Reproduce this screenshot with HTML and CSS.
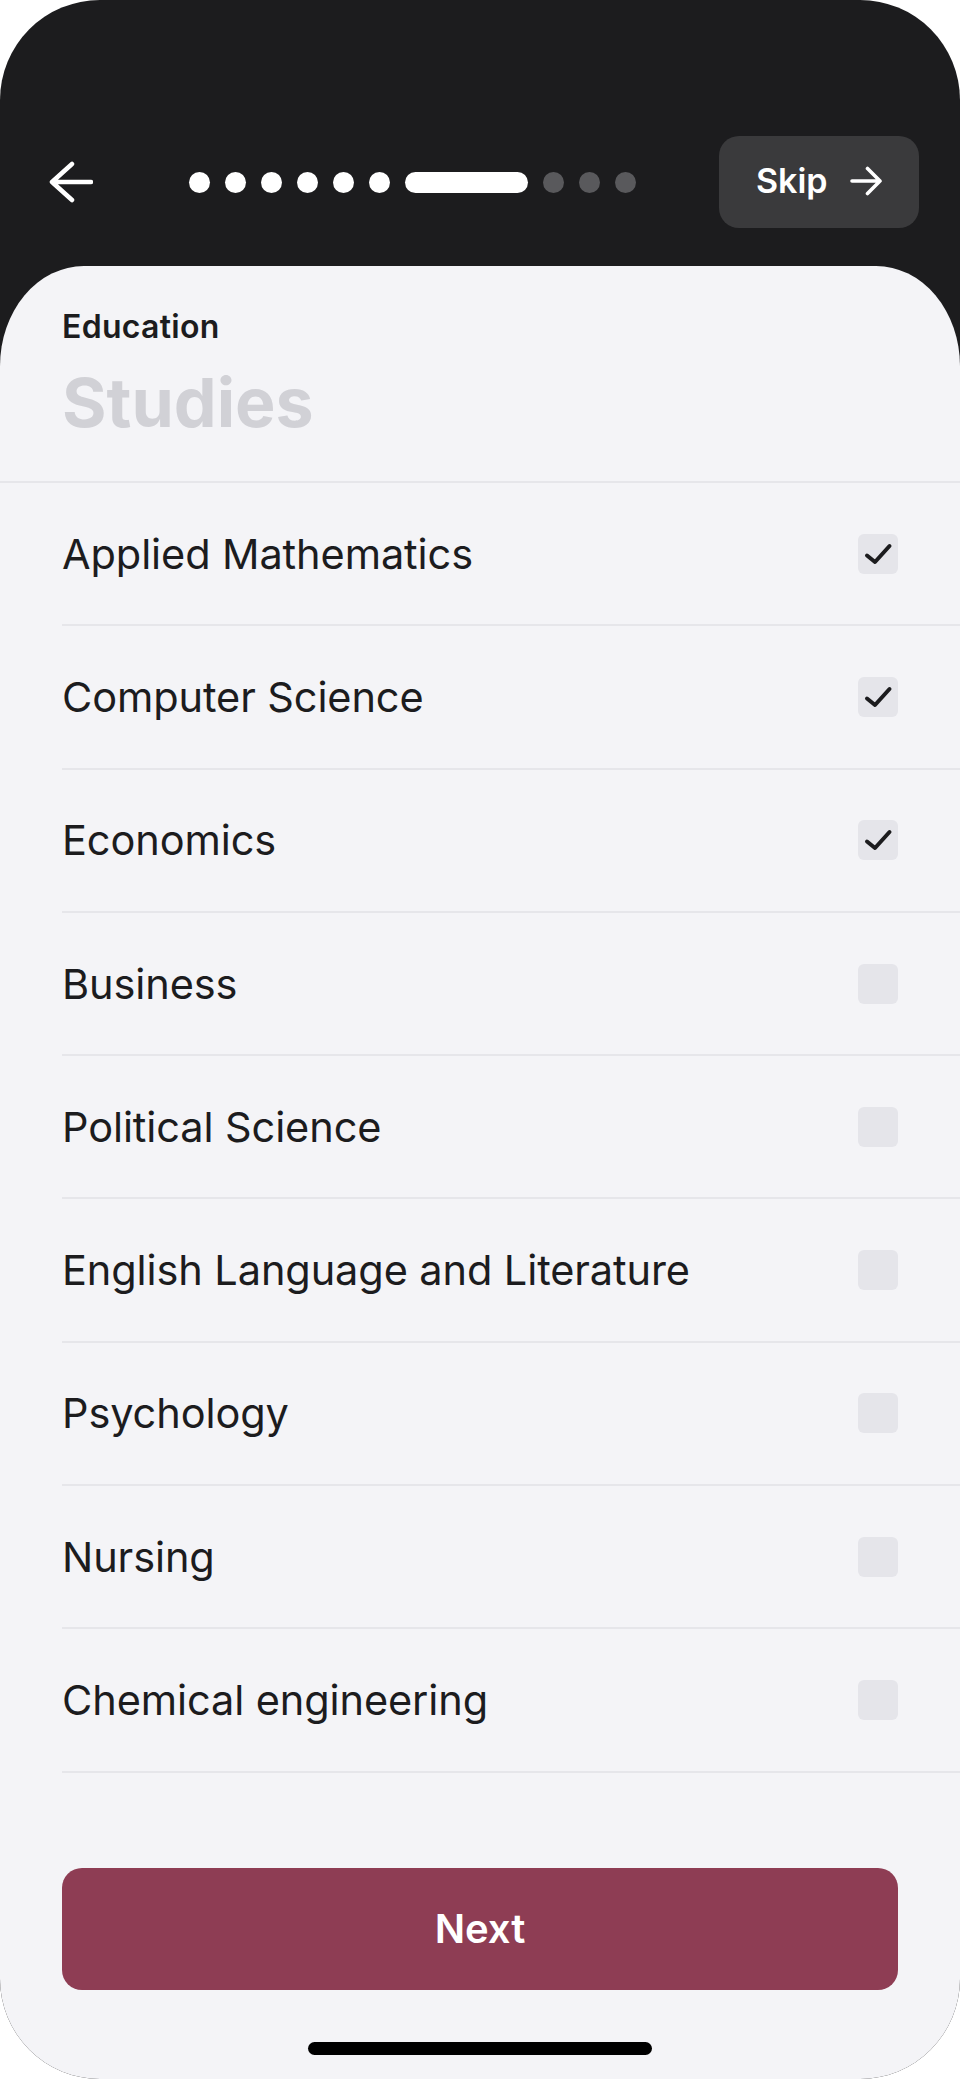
FILE: index.html
```html
<!DOCTYPE html>
<html lang="en">
<head>
    <meta charset="UTF-8">
    <meta name="viewport" content="width=device-width, initial-scale=1.0">
    <title>Studies</title>
    <link rel="stylesheet" href="styles.css">
</head>
<body>
    <div class="screen">
        <header class="topbar">
            <button class="back-btn" aria-label="Back">
                <svg width="44" height="44" viewBox="0 0 44 44" fill="none" stroke="#fff" stroke-width="4.5" stroke-linecap="round" stroke-linejoin="round">
                    <path d="M3 22H42M23 4L3 22L23 40"/>
                </svg>
            </button>
            <div class="steps">
                <span class="dot done"></span>
                <span class="dot done"></span>
                <span class="dot done"></span>
                <span class="dot done"></span>
                <span class="dot done"></span>
                <span class="dot done"></span>
                <span class="dot current"></span>
                <span class="dot"></span>
                <span class="dot"></span>
                <span class="dot"></span>
            </div>
            <button class="skip-btn">
                <span>Skip</span>
                <svg width="32" height="32" viewBox="0 0 32 32" fill="none" stroke="#fff" stroke-width="3.6" stroke-linecap="round" stroke-linejoin="round">
                    <path d="M2 16H30M17.5 3.5L30 16L17.5 28.5"/>
                </svg>
            </button>
        </header>

        <main class="sheet">
            <div class="sheet-head">
                <div class="eyebrow">Education</div>
                <h1 class="title">Studies</h1>
            </div>

            <ul class="options">
                <li class="option"><span>Applied Mathematics</span><span class="check on"></span></li>
                <li class="option"><span>Computer Science</span><span class="check on"></span></li>
                <li class="option"><span>Economics</span><span class="check on"></span></li>
                <li class="option"><span>Business</span><span class="check"></span></li>
                <li class="option"><span>Political Science</span><span class="check"></span></li>
                <li class="option"><span>English Language and Literature</span><span class="check"></span></li>
                <li class="option"><span>Psychology</span><span class="check"></span></li>
                <li class="option"><span>Nursing</span><span class="check"></span></li>
                <li class="option"><span>Chemical engineering</span><span class="check"></span></li>
            </ul>

            <div class="footer">
                <button class="next-btn">Next</button>
                <div class="home-bar"></div>
            </div>
        </main>
    </div>
</body>
</html>
```

FILE: styles.css
```css
* {
    box-sizing: border-box;
}
body {
    margin: 0;
    background: #fff;
    font-family: Inter, "Noto Sans", "DejaVu Sans", sans-serif;
    color: #1c1c1e;
}
button {
    font-family: inherit;
    border: none;
    padding: 0;
    cursor: pointer;
}
.screen {
    width: 960px;
    height: 2079px;
    border-radius: 100px;
    overflow: hidden;
    background: #1c1c1e;
    display: flex;
    flex-direction: column;
}

/* top bar */
.topbar {
    height: 266px;
    flex-shrink: 0;
    display: flex;
    align-items: flex-start;
    padding: 96px 41px 0 49px;
}
.back-btn {
    background: none;
    width: 44px;
    height: 44px;
    margin-top: 64px;
    display: flex;
}
.steps {
    display: flex;
    gap: 15px;
    margin-left: 95.5px;
    margin-top: 75.5px;
}
.dot {
    width: 21px;
    height: 21px;
    border-radius: 11px;
    background: #59595c;
}
.dot.done {
    background: #fff;
}
.dot.current {
    width: 123px;
    background: #fff;
}
.skip-btn {
    margin-left: auto;
    margin-top: 40px;
    width: 200px;
    height: 92px;
    border-radius: 20px;
    background: #3a3a3c;
    color: #fff;
    font-size: 34px;
    font-weight: 600;
    display: flex;
    align-items: center;
    padding: 0 0 3px 37px;
    gap: 22px;
}

/* sheet */
.sheet {
    flex: 1;
    background: #f4f4f7;
    border-radius: 84px 84px 0 0 / 100px 100px 0 0;
    display: flex;
    flex-direction: column;
}
.sheet-head {
    padding: 42px 62px 37px;
    border-bottom: 2px solid #e6e6ea;
}
.eyebrow {
    font-size: 32px;
    font-weight: 600;
    line-height: 38px;
    letter-spacing: 0.3px;
}
.title {
    margin: 14px 0 0;
    font-size: 68px;
    font-weight: 700;
    line-height: 84px;
    color: #d1d1d6;
}
.options {
    list-style: none;
    margin: 0;
    padding: 0 0 0 62px;
}
.option {
    height: 143.3px;
    border-bottom: 2px solid #e6e6ea;
    display: flex;
    align-items: center;
    justify-content: space-between;
    padding-right: 62px;
    font-size: 41.5px;
    letter-spacing: -0.1px;
}
.check {
    width: 40px;
    height: 40px;
    border-radius: 6px;
    background: #e5e5ea;
    flex-shrink: 0;
}
.check.on {
    background: #e5e5ea url("data:image/svg+xml,%3Csvg xmlns='http://www.w3.org/2000/svg' width='40' height='40' viewBox='0 0 40 40'%3E%3Cpath d='M9 21.5L17 28L31.5 12' fill='none' stroke='%231c1c1e' stroke-width='4' stroke-linecap='round' stroke-linejoin='round'/%3E%3C/svg%3E") no-repeat center;
}

/* footer */
.footer {
    padding: 95px 62px 0;
    display: flex;
    flex-direction: column;
    align-items: center;
}
.next-btn {
    width: 100%;
    height: 122px;
    border-radius: 20px;
    background: #8e3d54;
    color: #fff;
    font-size: 40px;
    font-weight: 600;
}
.home-bar {
    margin-top: 52px;
    width: 344px;
    height: 13px;
    border-radius: 7px;
    background: #000;
}
```
